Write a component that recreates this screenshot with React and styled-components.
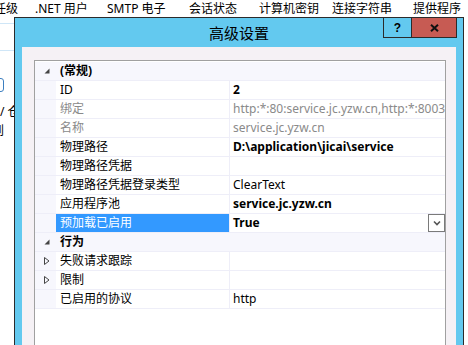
import React from "react";
import styled, { createGlobalStyle } from "styled-components";

const GlobalStyle = createGlobalStyle`
  html, body { margin: 0; padding: 0; background: #ffffff; }
  body {
    width: 468px; height: 345px; overflow: hidden;
    font-family: "Noto Sans", "Noto Sans CJK SC", sans-serif;
    font-size: 12px; color: #000;
  }
`;

const Page = styled.div`
  position: relative;
  width: 468px;
  height: 345px;
  overflow: hidden;
  background: #fff;
`;

const BackPane = styled.div`
  display: flex;
  flex-direction: column;
`;

const HeaderRow = styled.div`
  display: flex;
  height: 17px;
  white-space: nowrap;
  font-family: "Noto Sans", "Noto Sans CJK SC", sans-serif;
  font-size: 12px;
  line-height: 17px;
`;

const HeaderCell = styled.div`
  flex: 0 0 ${(p) => p.$w}px;
  margin-left: ${(p) => p.$ml || 0}px;
`;

const SelLine = styled.div`
  height: 1px;
  width: 14px;
  background: #cfe6f7;
  margin-top: ${(p) => p.$mt}px;
`;

const FragButton = styled.div`
  width: 14px;
  height: 12px;
  margin-left: -12px;
  margin-top: 27px;
  border: 1px solid #3d7fc0;
  border-radius: 3px;
`;

const FragText = styled.div`
  margin-left: ${(p) => p.$ml}px;
  margin-top: ${(p) => p.$mt}px;
  line-height: 17px;
  white-space: nowrap;
  font-family: "Noto Sans", "Noto Sans CJK SC", sans-serif;
`;

const Dialog = styled.div`
  position: absolute;
  left: 14px;
  top: 17px;
  width: 450px;
  height: 340px;
  border: 1px solid #2b2b2b;
  background: #63c9ef;
  padding: 0 7px;
  box-sizing: border-box;
  display: flex;
  flex-direction: column;
`;

const TitleBar = styled.div`
  position: relative;
  height: 29px;
  flex: 0 0 29px;
  display: flex;
  align-items: center;
  justify-content: center;
`;

const Title = styled.div`
  font-family: "Noto Sans CJK SC", sans-serif;
  font-size: 15px;
  line-height: 20px;
  margin-top: 1px;
`;

const Buttons = styled.div`
  position: absolute;
  top: -1px;
  right: -1px;
  display: flex;
  height: 21px;
  border: 1px solid #2b2b2b;
  box-sizing: border-box;
`;

const HelpBtn = styled.div`
  width: 27px;
  border-right: 1px solid #2b2b2b;
  background: #63c9ef;
  display: flex;
  align-items: center;
  justify-content: center;
  font-family: "Liberation Sans", sans-serif;
  font-weight: bold;
  font-size: 12px;
`;

const CloseBtn = styled.div`
  width: 44px;
  background: #c75b53;
  display: flex;
  align-items: center;
  justify-content: center;
`;

const Client = styled.div`
  flex: 1;
  background: #f5f1f5;
  padding: 13px 12px 0 12px;
  display: flex;
`;

const Grid = styled.div`
  flex: 1;
  border: 1px solid #a0a0a0;
  border-bottom: none;
  background: #fff;
  padding-top: 1px;
  display: flex;
  flex-direction: column;
`;

const Row = styled.div`
  display: flex;
  height: 18px;
  border-bottom: 1px solid #eeeef8;
  background: ${(p) => (p.$cat ? "#f7f7fd" : "#fff")};
`;

const Gutter = styled.div`
  flex: 0 0 21px;
  background: #f7f7fd;
  display: flex;
  align-items: center;
  justify-content: center;
  padding-left: 2px;
  box-sizing: border-box;
`;

const CatLabel = styled.div`
  flex: 1;
  padding-left: 4px;
  font-weight: bold;
  line-height: 18px;
  font-family: "Noto Sans", "Noto Sans CJK SC", sans-serif;
`;

const NameCell = styled.div`
  flex: 0 0 174px;
  box-sizing: border-box;
  padding-left: 4px;
  line-height: 18px;
  white-space: nowrap;
  overflow: hidden;
  background: ${(p) => (p.$sel ? "#3399ff" : "transparent")};
  color: ${(p) => (p.$sel ? "#fff" : p.$dim ? "#8a8a8a" : "#000")};
  border-right: 1px solid #eeeef8;
`;

const ValueCell = styled.div`
  flex: 1;
  position: relative;
  padding-left: 3px;
  line-height: 18px;
  white-space: nowrap;
  overflow: hidden;
  font-weight: ${(p) => (p.$bold ? "bold" : "normal")};
  color: ${(p) => (p.$dim ? "#8a8a8a" : "#000")};
`;

const DropBtn = styled.div`
  position: absolute;
  right: 0;
  top: 0;
  width: 17px;
  height: 18px;
  box-sizing: border-box;
  border: 1px solid #7a7a7a;
  background: #fff;
  display: flex;
  align-items: center;
  justify-content: center;
`;

const Expanded = () => (
  <svg width="8" height="8" viewBox="0 0 8 8">
    <polygon points="6.5,1.5 6.5,6.5 1.5,6.5" fill="#444" />
  </svg>
);

const Collapsed = () => (
  <svg width="8" height="10" viewBox="0 0 8 10">
    <polygon points="1.5,1.5 6,5 1.5,8.5" fill="none" stroke="#444" strokeWidth="1" />
  </svg>
);

const headers = [
  { t: "任级", w: 41, ml: -6 },
  { t: ".NET 用户", w: 72 },
  { t: "SMTP 电子", w: 82 },
  { t: "会话状态", w: 70 },
  { t: "计算机密钥", w: 73 },
  { t: "连接字符串", w: 81 },
  { t: "提供程序", w: 55 },
];

const rows = [
  { cat: true, label: "(常规)" },
  { name: "ID", value: "2", bold: true },
  { name: "绑定", value: "http:*:80:service.jc.yzw.cn,http:*:8003", dim: true },
  { name: "名称", value: "service.jc.yzw.cn", dim: true },
  { name: "物理路径", value: "D:\\application\\jicai\\service", bold: true },
  { name: "物理路径凭据", value: "" },
  { name: "物理路径凭据登录类型", value: "ClearText" },
  { name: "应用程序池", value: "service.jc.yzw.cn", bold: true },
  { name: "预加载已启用", value: "True", bold: true, sel: true, drop: true },
  { cat: true, label: "行为" },
  { name: "失败请求跟踪", value: "", collapsed: true },
  { name: "限制", value: "", collapsed: true },
  { name: "已启用的协议", value: "http" },
];

export default function App() {
  return (
    <Page>
      <GlobalStyle />
      <BackPane>
        <HeaderRow>
          {headers.map((h) => (
            <HeaderCell key={h.t} $w={h.w} $ml={h.ml}>
              {h.t}
            </HeaderCell>
          ))}
        </HeaderRow>
        <SelLine $mt={6} />
        <SelLine $mt={26} />
        <FragButton />
        <FragText $ml={0} $mt={11}>/ 仓</FragText>
        <FragText $ml={-8} $mt={2}>到</FragText>
      </BackPane>
      <Dialog>
        <TitleBar>
          <Title>高级设置</Title>
          <Buttons>
            <HelpBtn>?</HelpBtn>
            <CloseBtn>
              <svg width="9" height="8" viewBox="0 0 9 8">
                <path d="M1 0.8 L8 7.2 M8 0.8 L1 7.2" stroke="#111" strokeWidth="2" />
              </svg>
            </CloseBtn>
          </Buttons>
        </TitleBar>
        <Client>
          <Grid>
            {rows.map((r, i) =>
              r.cat ? (
                <Row key={i} $cat>
                  <Gutter>
                    <Expanded />
                  </Gutter>
                  <CatLabel>{r.label}</CatLabel>
                </Row>
              ) : (
                <Row key={i}>
                  <Gutter>{r.collapsed ? <Collapsed /> : null}</Gutter>
                  <NameCell $sel={r.sel} $dim={r.dim}>
                    {r.name}
                  </NameCell>
                  <ValueCell $bold={r.bold} $dim={r.dim}>
                    {r.value}
                    {r.drop && (
                      <DropBtn>
                        <svg width="8" height="6" viewBox="0 0 8 6">
                          <path d="M1 1.5 L4 4.5 L7 1.5" fill="none" stroke="#555" strokeWidth="1.6" />
                        </svg>
                      </DropBtn>
                    )}
                  </ValueCell>
                </Row>
              )
            )}
          </Grid>
        </Client>
      </Dialog>
    </Page>
  );
}
